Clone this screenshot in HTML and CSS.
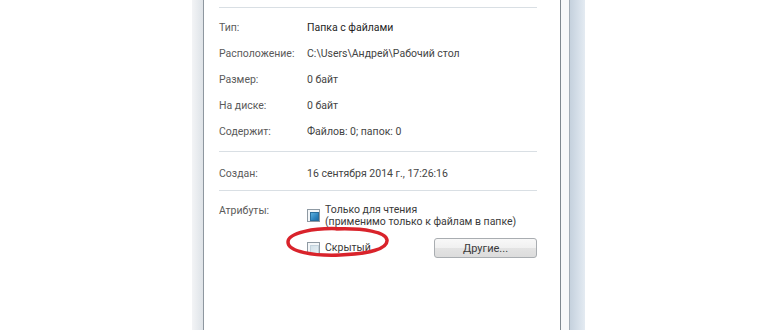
FILE: index.html
```html
<!DOCTYPE html>
<html lang="ru">
<head>
    <meta charset="UTF-8">
    <title>Свойства папки</title>
    <link rel="stylesheet" href="styles.css">
</head>
<body>

    <div class="window">
        <div class="frame-left"></div>

        <div class="content">
            <div class="sep sep-top"></div>

            <!-- General info -->
            <div class="props">
                <div class="label">Тип:</div>
                <div class="value value-strong">Папка с файлами</div>

                <div class="label">Расположение:</div>
                <div class="value">C:\Users\Андрей\Рабочий стол</div>

                <div class="label">Размер:</div>
                <div class="value">0 байт</div>

                <div class="label">На диске:</div>
                <div class="value">0 байт</div>

                <div class="label">Содержит:</div>
                <div class="value">Файлов: 0; папок: 0</div>
            </div>

            <div class="sep sep-mid"></div>

            <div class="props props-created">
                <div class="label">Создан:</div>
                <div class="value">16 сентября 2014 г., 17:26:16</div>
            </div>

            <div class="sep sep-low"></div>

            <!-- Attributes -->
            <div class="attrs">
                <div class="label">Атрибуты:</div>
                <div class="attr-list">
                    <div class="check-row">
                        <span class="checkbox checkbox-mixed"></span>
                        <span class="check-text">Только для чтения<br>(применимо только к файлам в папке)</span>
                    </div>
                    <div class="check-row check-row-hidden">
                        <span class="checkbox"></span>
                        <span class="check-text">Скрытый</span>
                        <button class="btn">Другие...</button>

                        <!-- red marker drawn over the checkbox -->
                        <svg class="marker" width="108" height="34" viewBox="0 0 108 34">
                            <path d="M60 4 C 30 2, 4 8, 4 17 C 4 27, 30 31, 56 30 C 84 29, 104 24, 103 15 C 102 7, 80 3, 52 4" fill="none" stroke="#d9232b" stroke-width="3.5" stroke-linecap="round"/>
                        </svg>
                    </div>
                </div>
            </div>
        </div>

        <div class="frame-right">
            <div class="frame-right-inner"></div>
        </div>
    </div>

</body>
</html>
```

FILE: styles.css
```css
* {
    margin: 0;
    padding: 0;
    box-sizing: border-box;
}

body {
    font-family: Roboto, "Noto Sans", sans-serif;
    font-size: 10.5px;
    color: #4a4a4a;
    background: #fff;
}

/* Dialog window (clipped by the screenshot) */
.window {
    display: flex;
    height: 330px;
    margin-left: 192px;
    width: 393px;
}

.frame-left {
    width: 12px;
    background: linear-gradient(90deg, #f3f4f6 0%, #e4e8ec 70%, #dfe3e7 100%);
    border-right: 1px solid #8e979f;
}

.frame-right {
    width: 25px;
    border-left: 1px solid #7f8890;
    background: #f7f8fa;
    padding-left: 8px;
}

.frame-right-inner {
    height: 100%;
    border-left: 1px solid #a3adb7;
    background: linear-gradient(90deg, #c5d1dd 0%, #d4dee8 50%, #e4ebf2 100%);
}

.content {
    flex: 1;
    background: #fff;
    padding: 0 23px 0 15px;
}

/* Separators */
.sep {
    height: 1px;
    background: #d9dfe4;
}

.sep-top {
    margin-top: 7px;
}

.sep-mid {
    margin-top: 7px;
}

.sep-low {
    margin-top: 4px;
}

/* Property rows */
.props {
    display: grid;
    grid-template-columns: 88px 1fr;
    grid-auto-rows: 26px;
    align-items: center;
    margin-top: 6px;
}

.props-created {
    margin-top: 8px;
}

.label {
    color: #5a5a5a;
    white-space: nowrap;
}

.value {
    color: #444;
    white-space: nowrap;
}

.value-strong {
    color: #1e1e1e;
}

/* Attributes */
.attrs {
    display: grid;
    grid-template-columns: 88px 1fr;
    margin-top: 13px;
}

.attrs .label {
    line-height: 14px;
}

.check-row {
    display: flex;
    align-items: flex-start;
    line-height: 12px;
}

.check-text {
    margin-left: 5px;
    color: #3a3a3a;
    white-space: nowrap;
}

.checkbox {
    width: 13px;
    height: 13px;
    border: 1px solid #8f9aa3;
    background: #f4f7f9;
    padding: 2px;
    flex: none;
    margin-top: 5px;
}

.checkbox::after {
    content: "";
    display: block;
    width: 100%;
    height: 100%;
    background: linear-gradient(135deg, #d3e2ea 0%, #e6eff4 100%);
    border: 1px solid #c3d2dc;
}

.checkbox-mixed::after {
    background: linear-gradient(135deg, #5fb0dd 0%, #2f86c0 60%, #1f6ea6 100%);
    border-color: #2b6f9c;
}

.check-row-hidden {
    position: relative;
    align-items: center;
    margin-top: 10px;
}

.check-row-hidden .checkbox {
    margin-top: 0;
}

.btn {
    margin-left: auto;
    width: 103px;
    height: 20px;
    font-family: inherit;
    font-size: 11px;
    color: #3a3a3a;
    border: 1px solid #a9adb1;
    border-radius: 3px;
    background: linear-gradient(180deg, #f8f8f8 0%, #f0f0f0 50%, #e3e3e3 51%, #dcdcdc 100%);
}

.marker {
    position: absolute;
    left: -23px;
    top: -13px;
    pointer-events: none;
}
```
